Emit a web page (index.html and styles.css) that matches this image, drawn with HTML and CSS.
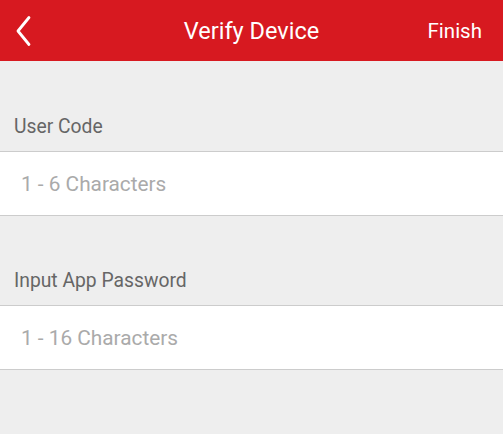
FILE: index.html
```html
<!DOCTYPE html>
<html lang="en">
<head>
    <meta charset="UTF-8">
    <meta name="viewport" content="width=device-width, initial-scale=1.0">
    <title>Verify Device</title>
    <link rel="stylesheet" href="styles.css">
</head>
<body>

<header class="top-bar">
    <a class="back-btn" href="#">
        <svg width="18" height="32" viewBox="0 0 18 32">
            <path d="M14 2.5 L3 16 L14 29.5" fill="none" stroke="#fff" stroke-width="2.8" stroke-linecap="round" stroke-linejoin="round"/>
        </svg>
    </a>
    <h1 class="title">Verify Device</h1>
    <a class="finish-btn" href="#">Finish</a>
</header>

<div class="form">
    <div class="group">
        <div class="label">User Code</div>
        <input class="field" type="text" placeholder="1 - 6 Characters">
    </div>
    <div class="group">
        <div class="label">Input App Password</div>
        <input class="field" type="password" placeholder="1 - 16 Characters">
    </div>
</div>

</body>
</html>
```

FILE: styles.css
```css
body {
    margin: 0;
    font-family: Roboto, "Noto Sans", sans-serif;
    background-color: #eeeeee;
}
.top-bar {
    height: 61px;
    background-color: #d71920;
    color: white;
    display: flex;
    align-items: center;
    justify-content: space-between;
    padding: 0 21px 0 15px;
    position: relative;
}
.back-btn {
    display: flex;
    width: 60px;
}
.title {
    margin: 0;
    font-size: 23.5px;
    font-weight: normal;
    position: absolute;
    left: 0;
    right: 0;
    text-align: center;
    pointer-events: none;
}
.finish-btn {
    color: white;
    text-decoration: none;
    font-size: 20.5px;
}
.form {
    padding-top: 1px;
}
.group {
    padding-top: 38px;
}
.label {
    height: 51px;
    line-height: 53px;
    padding-left: 14px;
    font-size: 19.3px;
    color: #666666;
}
.field {
    display: block;
    box-sizing: border-box;
    width: 100%;
    height: 65px;
    margin: 0;
    border: none;
    border-top: 1px solid #cccccc;
    border-bottom: 1px solid #cccccc;
    background: white;
    padding: 0 21px;
    font-family: Roboto, "Noto Sans", sans-serif;
    font-size: 20.8px;
    color: #333333;
    outline: none;
}
.field::placeholder {
    color: #aaaaaa;
}
```
